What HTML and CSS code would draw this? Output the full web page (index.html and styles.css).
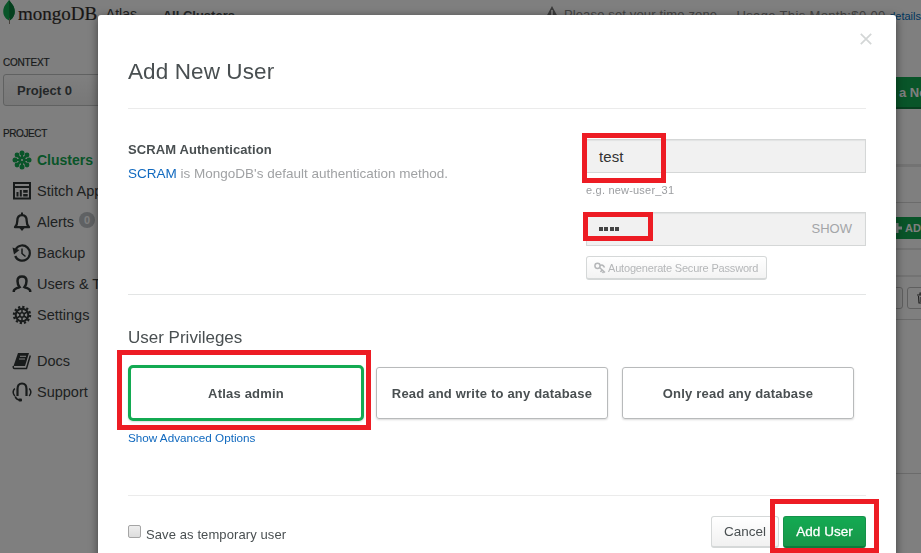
FILE: index.html
```html
<!DOCTYPE html>
<html lang="en">
<head>
<meta charset="utf-8">
<title>Atlas - Add New User</title>
<link rel="stylesheet" href="styles.css">
</head>
<body>
<div class="page">
  <header class="topbar">
    <svg class="leaf" viewBox="0 0 12 26"><path d="M6 0C8 3 12 6 12 12c0 5-3 8-5.500 9.500C3 20 0 17 0 12 0 6 4 3 6 0z" fill="#13aa52"/><path d="M6 0c2 3 6 6 6 12 0 5-3 8-5.500 9.500z" fill="#0b7f3c"/><path d="M6 19h1v6H6z" fill="#8b8176"/></svg>
    <span class="brand">mongoDB</span>
    <span class="product">Atlas</span>
    <span class="crumb">All Clusters</span>
    <svg class="warn" viewBox="0 0 14 13"><path d="M7 0l7 13H0z" fill="#777"/><path d="M6.200 4h1.600v5H6.200z" fill="#fff"/></svg>
    <span class="timezone">Please set your time zone</span>
    <span class="usage">Usage This Month:$0.00</span>
    <a class="details">details</a>
  </header>
  <div class="body">
    <nav class="sidebar">
      <div class="label">CONTEXT</div>
      <div class="select">Project 0</div>
      <div class="label label-project">PROJECT</div>
      <ul class="menu">
        <li class="active"><svg viewBox="0 0 20 20"><g stroke="#13aa52" stroke-width="2.200"><path d="M10 2v16M2 10h16M4.400 4.400l11.200 11.200M15.600 4.400L4.400 15.600"/></g><g fill="#13aa52"><circle cx="10" cy="10" r="3.600"/><circle cx="10" cy="3" r="2.500"/><circle cx="10" cy="17" r="2.500"/><circle cx="3" cy="10" r="2.500"/><circle cx="17" cy="10" r="2.500"/><circle cx="5" cy="5" r="2.400"/><circle cx="15" cy="15" r="2.400"/><circle cx="15" cy="5" r="2.400"/><circle cx="5" cy="15" r="2.400"/></g><circle cx="10" cy="10" r="1" fill="#fff"/></svg><span>Clusters</span></li>
        <li><svg viewBox="0 0 20 20"><path d="M2 2h16v15.500H2zM2 6h16" fill="none" stroke="#313636" stroke-width="2"/><path d="M4.500 11h2v4.500h-2zM7.800 9h2v6.500h-2zM11.200 9h4.500v2.800h-4.500zM11.200 13h4.500v2.500h-4.500z" fill="#313636"/></svg><span>Stitch Apps</span></li>
        <li><svg viewBox="0 0 20 20"><path d="M3 15.200C5.300 13 5.300 12 5.300 9c0-3.500 1.700-5.800 4.700-5.800s4.700 2.300 4.700 5.800c0 3 0 4 2.300 6.200z" fill="none" stroke="#313636" stroke-width="2.300" stroke-linejoin="round"/><path d="M9 .500h2V3H9zM7.500 16h5L10 19z" fill="#313636"/></svg><span>Alerts</span><b class="badge">0</b></li>
        <li><svg viewBox="0 0 20 20"><path d="M3.800 6A7.600 7.600 0 1 1 3.200 13" fill="none" stroke="#313636" stroke-width="2.200"/><path d="M.5 4.500L7.500 7 2 11.500z" fill="#313636"/><path d="M10 5.500v5l3.500 3" fill="none" stroke="#313636" stroke-width="1.500"/></svg><span>Backup</span></li>
        <li><svg viewBox="0 0 20 20"><path d="M1.800 18v-1c0-2.300 2.700-2.600 5.700-4C5.700 10.800 5.500 9 5.500 7c0-3 1.900-4.600 4.500-4.600S14.500 4 14.500 7c0 2-.2 3.800-2 6 3 1.400 5.700 1.700 5.700 4v1" fill="none" stroke="#313636" stroke-width="2.500"/></svg><span>Users &amp; Teams</span></li>
        <li><svg viewBox="0 0 20 20"><circle cx="10" cy="10" r="8" fill="none" stroke="#313636" stroke-width="2.400" stroke-dasharray="2.200 1.990"/><circle cx="10" cy="10" r="6.300" fill="none" stroke="#313636" stroke-width="2"/><path d="M10 4v12M4.800 7l10.400 6M4.800 13l10.400-6" stroke="#313636" stroke-width="1.500"/><circle cx="10" cy="10" r="2.200" fill="#fff" stroke="#313636" stroke-width="1.500"/></svg><span>Settings</span></li>
      </ul>
      <ul class="menu menu-help">
        <li><svg viewBox="0 0 20 20"><path d="M6 2h11l-4 13H1.500z" fill="#313636"/><path d="M8 5.300h6M7 8h6" stroke="#fff" stroke-width="1"/><path d="M18.300 4.500L14.500 17.500H2.500Q1 17.500 1.300 15" fill="none" stroke="#313636" stroke-width="1.500"/></svg><span>Docs</span></li>
        <li><svg viewBox="0 0 20 20"><path d="M5.500 14V7c0-3.500 1.500-5.500 4.500-5.500s4.500 2 4.500 5.500v7" fill="none" stroke="#313636" stroke-width="2.200"/><path d="M2.800 6.500Q-.5 10 2.800 14M17.200 6.500q3.300 3.500 0 7.500M3.200 14.500q.8 3 4.300 3.500" fill="none" stroke="#313636" stroke-width="1.500"/><rect x="6.500" y="16.500" width="3.500" height="3" rx="1" fill="#313636"/></svg><span>Support</span></li>
      </ul>
    </nav>
    <main class="content">
      <div class="build-row"><div class="build">a New Cluster</div></div>
      <div class="row-tabs"></div>
      <div class="row-add"><div class="add"><svg viewBox="0 0 10 10"><path d="M3.500 0h3v3.500H10v3H6.500V10h-3V6.500H0v-3h3.500z" fill="#fff"/></svg>ADD NEW USER</div></div>
      <div class="row-head"></div>
      <div class="row-user"><span class="mini"></span><span class="mini"><svg viewBox="0 0 12 12"><path d="M1 3h10M4 3V1h4v2M2.500 4l.5 7h6l.5-7M5 5v5M7 5v5" fill="none" stroke="#444" stroke-width="1.200"/></svg></span></div>
      <div class="row-space"></div>
    </main>
  </div>
</div>
<div class="backdrop"></div>
<section class="modal">
  <div class="modal-head">
    <h1>Add New User</h1>
    <svg class="close" viewBox="0 0 12 12"><path d="M.8.800l10.400 10.400M11.200.800L.8 11.200" stroke="#d3d6d6" stroke-width="1.700"/></svg>
  </div>
  <div class="auth">
    <div class="auth-info">
      <h2>SCRAM Authentication</h2>
      <p><a>SCRAM</a> is MongoDB's default authentication method.</p>
    </div>
    <div class="fields">
      <div class="field"><span>test</span><i class="mark mark-name"></i></div>
      <div class="hint">e.g. new-user_31</div>
      <div class="field"><span class="dots"><i></i><i></i><i></i><i></i></span><span class="show">SHOW</span><i class="mark mark-pass"></i></div>
      <div class="auto"><svg viewBox="0 0 12 12"><g fill="none" stroke="#b5b7b9" stroke-width="1.500"><circle cx="3.500" cy="3.800" r="2.600"/><path d="M5.500 5.500l5.500 5M8 8L6.500 10M9.700 9.500L8.500 11M6 3.500Q9 2 10.500 5.500"/></g></svg>Autogenerate Secure Password</div>
    </div>
  </div>
  <div class="privileges">
    <h3>User Privileges</h3>
    <div class="cards">
      <div class="card selected">Atlas admin<i class="mark mark-role"></i></div>
      <div class="card">Read and write to any database</div>
      <div class="card">Only read any database</div>
    </div>
    <a class="advanced">Show Advanced Options</a>
  </div>
  <div class="modal-foot">
    <span class="checkbox"></span><span class="temp">Save as temporary user</span>
    <div class="btn">Cancel</div>
    <div class="btn primary"><span>Add User</span><i class="mark mark-submit"></i></div>
  </div>
</section>
</body>
</html>
```

FILE: styles.css
```css
* { box-sizing: border-box; }
html, body { margin: 0; height: 100%; overflow: hidden; }
body { font-family: "Liberation Sans", Arial, sans-serif; color: #494f51; background: #fff; }
h1, h2, h3, p, ul { margin: 0; padding: 0; font-weight: normal; }
a { color: #1069bf; }
svg { display: block; flex: none; }

.page { width: 921px; height: 553px; overflow: hidden; background: #fff; }
.topbar { display: flex; height: 57px; white-space: nowrap; line-height: 16px; }
.leaf { width: 12px; height: 25px; margin-left: 3px; }
.brand { width: 88px; margin-left: 3px; padding-top: 6px; font: 19px/16px "Liberation Serif", serif; color: #332f2b; -webkit-text-stroke: .2px #332f2b; }
.product { width: 57px; padding-top: 6px; font-size: 14px; color: #444; }
.crumb { width: 383px; padding-top: 8px; font-size: 13px; font-weight: bold; color: #494f51; }
.warn { width: 14px; height: 13px; margin-top: 6px; }
.timezone { width: 173px; margin-left: 5px; padding-top: 7px; font-size: 13px; letter-spacing: .15px; color: #888; }
.usage { width: 153px; padding-top: 8px; font-size: 13px; letter-spacing: .35px; color: #888; }
.details { padding-top: 8px; font-size: 11px; color: #006cbc; }

.body { display: flex; }
.sidebar { flex: none; width: 180px; height: 496px; padding-left: 3px; }
.label { height: 12px; font-size: 10px; line-height: 12px; letter-spacing: -.2px; color: #313636; -webkit-text-stroke: .2px #313636; }
.label-project { margin-top: 22px; letter-spacing: -.4px; }
.select { height: 32px; margin-top: 5px; padding-left: 13px; border: 1px solid #c0c2c2; border-radius: 3px; background: linear-gradient(#fff, #efefef); font-size: 13px; font-weight: bold; line-height: 31px; }
.menu { margin-top: 4px; list-style: none; }
.menu-help { margin-top: 15px; }
.menu li { display: flex; align-items: center; height: 31px; padding-left: 9px; font-size: 14.500px; color: #3d4343; white-space: nowrap; }
.menu li svg { width: 20px; height: 20px; margin-right: 5px; }
.menu .active { font-size: 14px; font-weight: bold; color: #13aa52; }
.badge { width: 16px; height: 16px; margin: -3px 0 0 5px; border-radius: 50%; background: #bfc3c6; color: #fff; font-size: 11px; line-height: 16px; text-align: center; }

.content { flex: 1; }
.content > div { display: flex; justify-content: flex-end; }
.build-row { height: 110px; padding-top: 20px; border-bottom: 3px solid #e7e7e7; }
.build { width: 45px; height: 32px; padding-left: 23px; border-bottom: 2px solid #107f3e; background: #13aa52; color: #fff; font-size: 13px; font-weight: bold; line-height: 31px; white-space: nowrap; overflow: hidden; }
.row-tabs { height: 36px; border-bottom: 1px solid #d7d7d7; }
.row-add { height: 47px; padding-top: 14px; border-bottom: 2px solid #e7e7e7; }
.add { display: flex; align-items: center; gap: 3px; width: 29px; height: 22px; background: #13aa52; color: #fff; font-size: 11px; font-weight: bold; white-space: nowrap; overflow: hidden; }
.add svg { width: 10px; height: 10px; }
.row-head { height: 27px; border-bottom: 2px solid #e7e7e7; }
.row-user { gap: 4px; height: 43px; padding-top: 10px; border-bottom: 1px solid #d7d7d7; overflow: hidden; }
.mini { flex: none; width: 30px; height: 22px; padding: 4px 8px; border: 1px solid #bfbfbf; border-radius: 3px; margin-right: -16px; }
.mini:first-child { margin-right: 0; }
.mini svg { width: 12px; height: 12px; }
.row-space { height: 154px; border-bottom: 1px solid #d7d7d7; }

.backdrop { position: fixed; inset: 0; background: rgba(0, 0, 0, .5); }
.modal { position: absolute; left: 98px; top: 15px; width: 798px; height: 560px; padding: 0 30px; border-radius: 3px 3px 0 0; background: #fff; box-shadow: 0 2px 10px rgba(0, 0, 0, .5); }
.modal-head { display: flex; justify-content: space-between; height: 94px; border-bottom: 1px solid #ebebeb; }
h1 { padding-top: 44px; font-size: 22.500px; line-height: 26px; letter-spacing: .1px; }
.close { width: 12px; height: 12px; margin: 18px -6px 0 0; }

.auth { display: flex; justify-content: space-between; height: 186px; padding-top: 30px; border-bottom: 1px solid #e3e5e5; }
.auth h2 { margin-top: 3px; font-size: 13px; font-weight: bold; line-height: 16px; letter-spacing: .1px; }
.auth p { margin-top: 7px; font-size: 13.500px; line-height: 17px; letter-spacing: 0; color: #a0a2a4; }
.fields { width: 280px; }
.field { position: relative; display: flex; align-items: center; justify-content: space-between; height: 34px; padding: 0 13px 0 12px; border: 1px solid #d5d7d7; background: #f1f1f1; font-size: 15px; letter-spacing: .1px; color: #333; box-shadow: inset 0 1px 1px #e2e3e3; }
.hint { height: 39px; padding-top: 9px; font-size: 11px; line-height: 16px; letter-spacing: .2px; color: #9b9da0; }
.dots { display: flex; gap: 1.300px; margin-top: -1px; }
.dots i { width: 4px; height: 4px; background: #444; }
.show { margin-top: -2px; font-size: 13px; letter-spacing: 0; color: #a3a5a8; }
.auto { display: flex; align-items: center; width: 181px; height: 24px; margin-top: 10px; padding: 1px 0 0 7px; border: 1px solid #d5d8d8; border-bottom-width: 2px; border-radius: 3px; background: linear-gradient(#fff, #f3f3f3); font-size: 11px; letter-spacing: -.18px; color: #b5b7b9; white-space: nowrap; }
.auto svg { width: 12px; height: 12px; margin-right: 2px; }

.privileges { height: 201px; padding-top: 32px; border-bottom: 1px solid #ebebeb; }
h3 { height: 38px; font-size: 17px; line-height: 21px; }
.cards { display: flex; gap: 14px; padding: 2px; }
.card { position: relative; display: flex; align-items: center; justify-content: center; width: 232px; height: 52px; border: 1px solid #b8babb; border-radius: 3px; font-size: 13px; font-weight: bold; letter-spacing: .2px; box-shadow: 0 1px 2px rgba(0, 0, 0, .15); }
.selected { width: 236px; height: 56px; margin: -2px; border: 3px solid #13aa52; border-radius: 5px; }
.advanced { display: block; margin-top: 10px; font-size: 11.700px; line-height: 14px; }

.modal-foot { display: flex; height: 62px; padding-top: 20px; }
.checkbox { width: 13px; height: 13px; margin-top: 9px; border: 1px solid #a5a5a5; border-radius: 2px; background: linear-gradient(#eee, #ddd); }
.temp { flex: 1; padding: 11px 0 0 5px; font-size: 13px; line-height: 16px; letter-spacing: .1px; }
.btn { width: 68px; height: 32px; border: 1px solid #d5d8d8; border-bottom-width: 2px; border-radius: 3px; background: linear-gradient(#fff, #f1f1f1); font-size: 13.500px; line-height: 30px; text-align: center; }
.primary { position: relative; width: 83px; margin-left: 4px; border-color: #15914a #15914a #0e7a3b; background: linear-gradient(#13aa52, #189649); color: #fff; -webkit-text-stroke: .3px #fff; }

.mark { position: absolute; border: 5px solid #ed1c24; }
.mark-name { left: -5px; top: -7px; width: 84px; height: 50px; }
.mark-pass { left: -4px; top: -1px; width: 70px; height: 29px; }
.mark-role { left: -14px; top: -18px; width: 254px; height: 80px; }
.mark-submit { left: -14px; top: -18px; width: 109px; height: 54px; }
```
